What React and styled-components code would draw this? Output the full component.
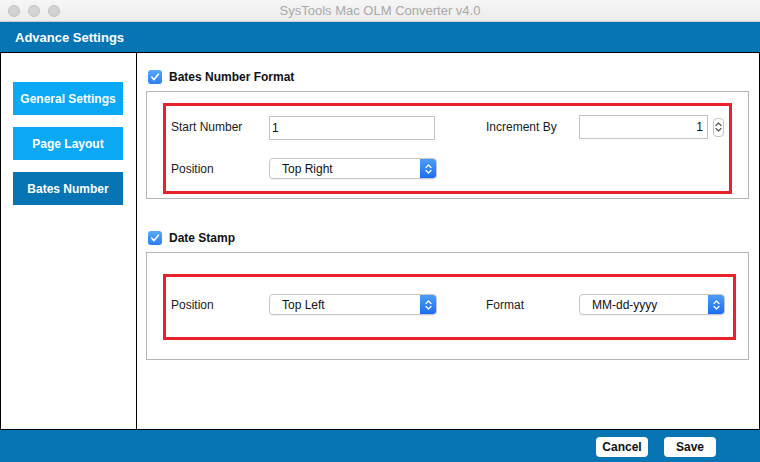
import React from "react";
import styled, { createGlobalStyle } from "styled-components";

const Global = createGlobalStyle`
  html, body { margin: 0; padding: 0; background: #fff; }
  body { font-family: "Liberation Sans", Arial, Helvetica, sans-serif; }
  * { box-sizing: border-box; }
`;

const Window = styled.div`
  width: 760px;
  height: 462px;
  display: flex;
  flex-direction: column;
  background: #fff;
  overflow: hidden;
`;

const TitleBar = styled.div`
  height: 22px;
  flex: none;
  display: flex;
  align-items: center;
  position: relative;
  background: linear-gradient(#f6f6f6, #ececec);
  border-bottom: 1px solid #cfcfcf;
`;

const Lights = styled.div`
  display: flex;
  gap: 8px;
  padding-left: 8px;
`;

const Light = styled.span`
  width: 12px;
  height: 12px;
  border-radius: 50%;
  background: #d3d3d3;
  border: 1px solid #c4c4c4;
`;

const WindowTitle = styled.div`
  position: absolute;
  left: 0;
  right: 0;
  text-align: center;
  font-size: 13px;
  color: #a9a9a9;
  pointer-events: none;
`;

const Header = styled.div`
  height: 30px;
  flex: none;
  background: #0774b4;
  color: #fff;
  font-weight: bold;
  font-size: 13px;
  display: flex;
  align-items: center;
  padding-left: 15px;
`;

const Main = styled.div`
  flex: 1;
  display: flex;
  border: 1px solid #000;
  min-height: 0;
`;

const Sidebar = styled.div`
  width: 136px;
  flex: none;
  border-right: 1px solid #000;
  display: flex;
  flex-direction: column;
  gap: 12px;
  padding: 29px 0 0 12px;
`;

const NavButton = styled.div`
  width: 110px;
  height: 33px;
  display: flex;
  align-items: center;
  justify-content: center;
  color: #fff;
  font-weight: bold;
  font-size: 12px;
  background: ${(p) => (p.$active ? "#0774b4" : "#0ba8f4")};
`;

const Content = styled.div`
  flex: 1;
  display: flex;
  flex-direction: column;
  padding: 16px 10px 0 9px;
`;

const Section = styled.div`
  display: flex;
  flex-direction: column;
  gap: 6px;
  margin-bottom: ${(p) => p.$mb || 0}px;
`;

const SectionHead = styled.div`
  display: flex;
  align-items: center;
  gap: 7px;
  padding-left: 2px;
  font-weight: bold;
  font-size: 12px;
  color: #111;
  height: 16px;
`;

const CheckBox = styled.span`
  width: 14px;
  height: 14px;
  border-radius: 3px;
  background: linear-gradient(#5aa8fb, #2a7ff5);
  display: flex;
  align-items: center;
  justify-content: center;
`;

const GroupBox = styled.div`
  border: 1px solid #b5b5b5;
  padding: ${(p) => p.$pad};
`;

const RedBox = styled.div`
  border: 3px solid #e8212b;
  display: grid;
  grid-template-columns: 103px 168px 49px 93px auto;
  align-items: center;
  row-gap: ${(p) => p.$rowGap || 0}px;
  padding: ${(p) => p.$pad};
`;

const Label = styled.div`
  font-size: 12px;
  color: #1a1a1a;
  padding-left: ${(p) => (p.$indent ? 5 : 0)}px;
`;

const TextInput = styled.div`
  height: 24px;
  width: ${(p) => p.$w}px;
  border: 1px solid #c2c2c2;
  font-size: 12px;
  color: #111;
  display: flex;
  align-items: center;
  justify-content: ${(p) => (p.$right ? "flex-end" : "flex-start")};
  padding: 0 4px 0 2px;
  margin-top: ${(p) => p.$mt || 0}px;
`;

const Field = styled.div`
  display: flex;
  align-items: center;
  gap: 5px;
`;

const Stepper = styled.div`
  width: 11px;
  height: 19px;
  border: 1px solid #c4c4c4;
  border-radius: 4px;
  display: flex;
  align-items: center;
  justify-content: center;
  background: #fff;
`;

const SelectBox = styled.div`
  height: 21px;
  width: ${(p) => p.$w}px;
  border: 1px solid #c6c6c6;
  border-radius: 4px;
  display: flex;
  align-items: stretch;
  overflow: hidden;
  background: #fff;
  box-shadow: 0 1px 0 rgba(0, 0, 0, 0.05);
`;

const SelectText = styled.div`
  flex: 1;
  font-size: 12px;
  color: #111;
  display: flex;
  align-items: center;
  padding-left: 12px;
`;

const SelectArrow = styled.div`
  width: 16px;
  background: linear-gradient(#4d9cf9, #1c6ef1);
  display: flex;
  align-items: center;
  justify-content: center;
`;

const Footer = styled.div`
  height: 32px;
  flex: none;
  background: #0774b4;
  display: flex;
  justify-content: flex-end;
  align-items: center;
  gap: 16px;
  padding-right: 44px;
  padding-top: 2px;
`;

const FooterButton = styled.div`
  width: 52px;
  height: 20px;
  border-radius: 4px;
  background: #fff;
  color: #111;
  font-weight: bold;
  font-size: 12px;
  display: flex;
  align-items: center;
  justify-content: center;
`;

const Check = () => (
  <svg width="10" height="10" viewBox="0 0 10 10">
    <path d="M1.8 5.2 L4 7.6 L8.4 2.2" fill="none" stroke="#fff" strokeWidth="1.6" strokeLinecap="round" strokeLinejoin="round" />
  </svg>
);

const Chevrons = ({ color = "#fff" }) => (
  <svg width="7" height="12" viewBox="0 0 7 12">
    <path d="M1 4.5 L3.5 2 L6 4.5 M1 7.5 L3.5 10 L6 7.5" fill="none" stroke={color} strokeWidth="1.2" strokeLinecap="round" strokeLinejoin="round" />
  </svg>
);

const Select = ({ value, w }) => (
  <SelectBox $w={w}>
    <SelectText>{value}</SelectText>
    <SelectArrow>
      <Chevrons />
    </SelectArrow>
  </SelectBox>
);

export default function App() {
  return (
    <>
      <Global />
      <Window>
        <TitleBar>
          <Lights>
            <Light />
            <Light />
            <Light />
          </Lights>
          <WindowTitle>SysTools Mac OLM Converter v4.0</WindowTitle>
        </TitleBar>
        <Header>Advance Settings</Header>
        <Main>
          <Sidebar>
            <NavButton>General Settings</NavButton>
            <NavButton>Page Layout</NavButton>
            <NavButton $active>Bates Number</NavButton>
          </Sidebar>
          <Content>
            <Section $mb={31}>
              <SectionHead>
                <CheckBox>
                  <Check />
                </CheckBox>
                Bates Number Format
              </SectionHead>
              <GroupBox $pad="11px 16px 4px 16px">
                <RedBox $pad="8px 0 12px 0" $rowGap={18}>
                  <Label $indent>Start Number</Label>
                  <TextInput $w={166} $mt={2}>1</TextInput>
                  <span />
                  <Label>Increment By</Label>
                  <Field>
                    <TextInput $w={129} $right>1</TextInput>
                    <Stepper>
                      <Chevrons color="#555" />
                    </Stepper>
                  </Field>
                  <Label $indent>Position</Label>
                  <Select value="Top Right" w={168} />
                </RedBox>
              </GroupBox>
            </Section>
            <Section>
              <SectionHead>
                <CheckBox>
                  <Check />
                </CheckBox>
                Date Stamp
              </SectionHead>
              <GroupBox $pad="21px 12px 19px 16px">
                <RedBox $pad="17px 0 22px 0">
                  <Label $indent>Position</Label>
                  <Select value="Top Left" w={168} />
                  <span />
                  <Label>Format</Label>
                  <Select value="MM-dd-yyyy" w={146} />
                </RedBox>
              </GroupBox>
            </Section>
          </Content>
        </Main>
        <Footer>
          <FooterButton>Cancel</FooterButton>
          <FooterButton>Save</FooterButton>
        </Footer>
      </Window>
    </>
  );
}
